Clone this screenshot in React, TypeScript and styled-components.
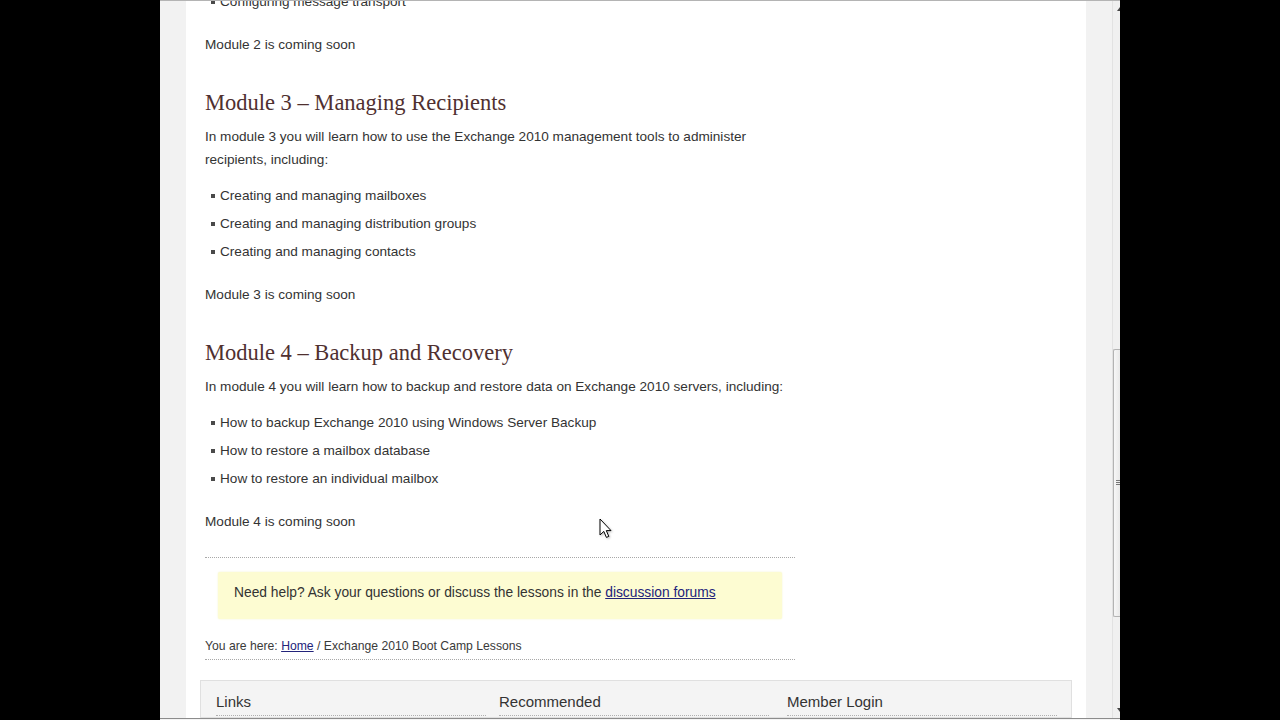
import React from "react";
import styled, { createGlobalStyle } from "styled-components";

const GlobalStyle = createGlobalStyle`
  html, body {
    margin: 0;
    padding: 0;
    background: #000;
  }
  #root {
    height: 720px;
  }
`;

const modules = [
  {
    title: "Module 3 \u2013 Managing Recipients",
    intro:
      "In module 3 you will learn how to use the Exchange 2010 management tools to administer recipients, including:",
    items: [
      "Creating and managing mailboxes",
      "Creating and managing distribution groups",
      "Creating and managing contacts",
    ],
    soon: "Module 3 is coming soon",
  },
  {
    title: "Module 4 \u2013 Backup and Recovery",
    intro:
      "In module 4 you will learn how to backup and restore data on Exchange 2010 servers, including:",
    items: [
      "How to backup Exchange 2010 using Windows Server Backup",
      "How to restore a mailbox database",
      "How to restore an individual mailbox",
    ],
    soon: "Module 4 is coming soon",
  },
];

const App = () => {
  return (
    <>
      <GlobalStyle />
      <Screen>
        <SideBlack />
        <Browser>
          <TopEdge />
          <ViewRow>
            <Viewport>
              <Page>
                <Main>
                  <BulletList $first>
                    <Bullet>Configuring message transport</Bullet>
                  </BulletList>
                  <Soon>Module 2 is coming soon</Soon>

                  {modules.map((m) => (
                    <React.Fragment key={m.title}>
                      <Heading>{m.title}</Heading>
                      <Intro>{m.intro}</Intro>
                      <BulletList>
                        {m.items.map((item) => (
                          <Bullet key={item}>{item}</Bullet>
                        ))}
                      </BulletList>
                      <Soon>{m.soon}</Soon>
                    </React.Fragment>
                  ))}

                  <Divider $gap={24} />
                  <HelpBox>
                    Need help? Ask your questions or discuss the lessons in the{" "}
                    <Link href="#">discussion forums</Link>
                  </HelpBox>
                  <Breadcrumb>
                    You are here: <Link href="#">Home</Link> / Exchange 2010 Boot Camp Lessons
                  </Breadcrumb>
                  <Divider $gap={4} />
                </Main>
                <Footer>
                  <FooterCol>
                    <FooterTitle>Links</FooterTitle>
                  </FooterCol>
                  <FooterCol>
                    <FooterTitle>Recommended</FooterTitle>
                  </FooterCol>
                  <FooterCol>
                    <FooterTitle>Member Login</FooterTitle>
                  </FooterCol>
                </Footer>
              </Page>
              <Cursor viewBox="0 0 13 21" width="13" height="21">
                <path
                  d="M1 1 L1 17 L4.8 13.4 L7.4 19.4 L9.8 18.4 L7.3 12.6 L12 12.6 Z"
                  fill="#fff"
                  stroke="#000"
                  strokeWidth="1"
                  strokeLinejoin="round"
                />
              </Cursor>
            </Viewport>
            <Scrollbar>
              <ArrowUp />
              <TrackSpace $h={334} />
              <Thumb>
                <Grip />
              </Thumb>
              <TrackSpace $h={86} />
              <ArrowDown />
            </Scrollbar>
          </ViewRow>
          <BottomEdge />
        </Browser>
        <SideBlack />
      </Screen>
    </>
  );
};

const Screen = styled.div`
  display: flex;
  width: 1280px;
  height: 720px;
  overflow: hidden;
  background: #000;
`;

const SideBlack = styled.div`
  width: 160px;
  flex-shrink: 0;
  background: #000;
`;

const Browser = styled.div`
  width: 960px;
  display: flex;
  flex-direction: column;
  background: #f1f1f1;
`;

const TopEdge = styled.div`
  height: 1px;
  background: #b4b4b4;
`;

const BottomEdge = styled.div`
  height: 2px;
  border-top: 1px solid #8c8c8c;
  background: #f4f4f4;
  box-sizing: border-box;
`;

const ViewRow = styled.div`
  flex: 1;
  display: flex;
  min-height: 0;
`;

const Viewport = styled.div`
  position: relative;
  flex: 1;
  overflow: hidden;
  padding: 0 26px;
  background: #f2f2f2;
`;

const Page = styled.div`
  width: 900px;
  height: 100%;
  background: #fff;
  display: flex;
  flex-direction: column;
  font-family: "Liberation Sans", Arial, sans-serif;
  color: #333;
`;

const Main = styled.div`
  width: 590px;
  margin-left: 19px;
  display: flex;
  flex-direction: column;
`;

const BulletList = styled.ul<{ $first?: boolean }>`
  list-style: none;
  margin: ${(p) => (p.$first ? "-11px" : "13px")} 0 0 0;
  padding: 0 0 0 6px;
  display: flex;
  flex-direction: column;
  gap: 5px;
`;

const Bullet = styled.li`
  display: flex;
  align-items: center;
  gap: 5px;
  font-size: 13.6px;
  line-height: 23px;
  &::before {
    content: "";
    width: 4px;
    height: 4px;
    background: #4a4a4a;
    flex-shrink: 0;
  }
`;

const Soon = styled.p`
  margin: 20px 0 0 0;
  font-size: 13.6px;
  line-height: 23px;
`;

const Heading = styled.h2`
  margin: 32px 0 0 0;
  font-family: "Liberation Serif", "Times New Roman", serif;
  font-weight: normal;
  font-size: 22.5px;
  line-height: 30px;
  color: #4f3030;
`;

const Intro = styled.p`
  margin: 7px 0 0 0;
  font-size: 13.6px;
  line-height: 23px;
`;

const Divider = styled.div<{ $gap: number }>`
  margin-top: ${(p) => p.$gap}px;
  border-top: 1px dotted #a8a8a8;
`;

const HelpBox = styled.div`
  margin: 14px 13px 0;
  padding: 10px 16px 16px;
  background: #fdfcd2;
  border-radius: 2px;
  box-shadow: 0 0 2px #f4f3c8;
  font-size: 13.8px;
  line-height: 21px;
`;

const Link = styled.a`
  color: #22237a;
  text-decoration: underline;
`;

const Breadcrumb = styled.div`
  margin-top: 18px;
  font-size: 12.2px;
  line-height: 18px;
  color: #3a3a3a;
`;

const Footer = styled.div`
  margin: 20px 14px 0;
  background: #f4f4f4;
  border: 1px solid #e0e0e0;
  display: grid;
  grid-template-columns: 283px 288px 1fr;
  padding: 0 0 0 15px;
  flex: 1;
`;

const FooterCol = styled.div`
  display: flex;
  flex-direction: column;
`;

const FooterTitle = styled.div`
  width: 270px;
  padding: 11px 0 3px;
  font-size: 15px;
  line-height: 20px;
  color: #333;
  border-bottom: 1px dotted #b0b0b0;
`;

const Cursor = styled.svg`
  position: absolute;
  left: 439px;
  top: 517px;
  filter: drop-shadow(1px 1px 1px rgba(0, 0, 0, 0.25));
`;

const Scrollbar = styled.div`
  width: 8px;
  flex-shrink: 0;
  display: flex;
  flex-direction: column;
  background: #f0f0f0;
  border-left: 1px solid #e2e2e2;
  box-sizing: border-box;
`;

const ArrowUp = styled.div`
  height: 16px;
  display: flex;
  align-items: center;
  &::after {
    content: "";
    margin-left: 4px;
    border-bottom: 4px solid #444;
    border-left: 3px solid transparent;
  }
`;

const ArrowDown = styled.div`
  height: 16px;
  margin-top: auto;
  display: flex;
  align-items: center;
  &::after {
    content: "";
    margin-left: 4px;
    border-top: 4px solid #444;
    border-left: 3px solid transparent;
  }
`;

const TrackSpace = styled.div<{ $h: number }>`
  height: ${(p) => p.$h}px;
`;

const Thumb = styled.div`
  height: 268px;
  border: 1px solid #b3b3b3;
  border-right: none;
  border-radius: 2px 0 0 2px;
  background: linear-gradient(to right, #f7f7f7, #e8e8e8);
  display: flex;
  align-items: center;
  justify-content: flex-end;
`;

const Grip = styled.div`
  width: 4px;
  height: 6px;
  background: repeating-linear-gradient(to bottom, #777 0 1px, transparent 1px 2px);
`;

export default App;
